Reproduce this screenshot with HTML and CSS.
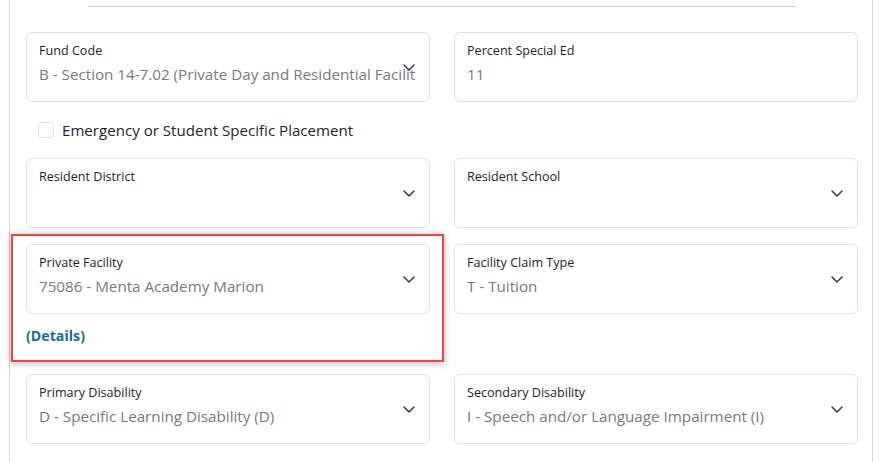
FILE: index.html
```html
<!DOCTYPE html>
<html>
<head>
<meta charset="utf-8">
<link rel="stylesheet" href="styles.css">
</head>
<body>
<div class="panel">
  <div class="rule"></div>

  <div class="grid row-first">
    <div class="field">
      <div class="label">Fund Code</div>
      <div class="value">B - Section 14-7.02 (Private Day and Residential Facilit</div>
      <svg class="chev" viewBox="0 0 12 7"><path d="M1 1l5 5 5-5"/></svg>
    </div>
    <div class="field plain">
      <div class="label">Percent Special Ed</div>
      <div class="value">11</div>
    </div>
  </div>

  <label class="check-row">
    <span class="box"></span>
    <span class="check-text">Emergency or Student Specific Placement</span>
  </label>

  <div class="grid">
    <div class="field">
      <div class="label">Resident District</div>
      <div class="value"></div>
      <svg class="chev" viewBox="0 0 12 7"><path d="M1 1l5 5 5-5"/></svg>
    </div>
    <div class="field">
      <div class="label">Resident School</div>
      <div class="value"></div>
      <svg class="chev" viewBox="0 0 12 7"><path d="M1 1l5 5 5-5"/></svg>
    </div>
  </div>

  <div class="grid row-gap">
    <div class="cell highlighted">
      <div class="field">
        <div class="label">Private Facility</div>
        <div class="value">75086 - Menta Academy Marion</div>
        <svg class="chev" viewBox="0 0 12 7"><path d="M1 1l5 5 5-5"/></svg>
      </div>
      <a class="details">(Details)</a>
      <div class="callout"></div>
    </div>
    <div class="cell">
      <div class="field">
        <div class="label">Facility Claim Type</div>
        <div class="value">T - Tuition</div>
        <svg class="chev" viewBox="0 0 12 7"><path d="M1 1l5 5 5-5"/></svg>
      </div>
    </div>
  </div>

  <div class="grid row-gap">
    <div class="field">
      <div class="label">Primary Disability</div>
      <div class="value">D - Specific Learning Disability (D)</div>
      <svg class="chev" viewBox="0 0 12 7"><path d="M1 1l5 5 5-5"/></svg>
    </div>
    <div class="field">
      <div class="label">Secondary Disability</div>
      <div class="value">I - Speech and/or Language Impairment (I)</div>
      <svg class="chev" viewBox="0 0 12 7"><path d="M1 1l5 5 5-5"/></svg>
    </div>
  </div>
</div>
</body>
</html>
```

FILE: styles.css
```css
html, body {
  margin: 0;
  padding: 0;
  background: #ffffff;
}
body {
  font-family: "Segoe UI", "Open Sans", "Noto Sans", sans-serif;
  color: #212529;
  width: 888px;
  height: 462px;
  overflow: hidden;
}
.panel {
  margin-left: 9px;
  width: 864px;
  height: 462px;
  border-left: 1px solid #d4d4d4;
  border-right: 1px solid #d4d4d4;
  padding: 6px 16px 0 16px;
  box-sizing: border-box;
}
.rule {
  margin-left: 62px;
  width: 707px;
  border-top: 1px solid #cfcfcf;
}
.grid {
  display: grid;
  grid-template-columns: 404px 404px;
  column-gap: 24px;
  align-items: start;
}
.row-first {
  margin-top: 25px;
}
.row-gap {
  margin-top: 16px;
}
.field {
  position: relative;
  height: 70px;
  box-sizing: border-box;
  border: 1px solid #dee2e6;
  border-radius: 6px;
  padding: 8px 12px 0 12px;
  background: #fff;
}
.label {
  font-size: 12.6px;
  line-height: 20px;
  color: #212529;
  white-space: nowrap;
}
.value {
  margin-top: 1px;
  margin-right: -8px;
  font-size: 15.2px;
  line-height: 24px;
  color: #757b82;
  white-space: nowrap;
  overflow: hidden;
  height: 24px;
}
.chev {
  position: absolute;
  right: 14px;
  top: 31px;
  width: 12px;
  height: 7px;
  fill: none;
  stroke: #343a40;
  stroke-width: 1.5;
  stroke-linecap: round;
  stroke-linejoin: round;
}
.check-row {
  display: flex;
  align-items: center;
  gap: 8px;
  height: 56px;
  padding-left: 12px;
}
.box {
  width: 16px;
  height: 16px;
  box-sizing: border-box;
  border: 1px solid #dee2e6;
  border-radius: 4px;
}
.check-text {
  font-size: 15.1px;
  color: #212529;
}
.cell {
  position: relative;
}
.details {
  display: block;
  margin: 11px 0 11px 0;
  line-height: 22px;
  font-size: 14.2px;
  font-weight: 700;
  color: #1a6b8e;
}
.callout {
  position: absolute;
  left: -15px;
  right: -14px;
  top: -10px;
  bottom: -4px;
  border: 2px solid #ef4549;
  box-shadow: 0 1px 7px rgba(0, 0, 0, 0.32);
  pointer-events: none;
}
```
